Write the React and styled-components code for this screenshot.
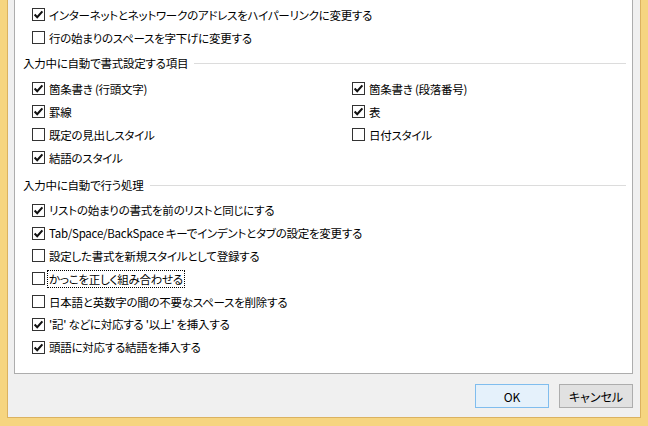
import React from 'react';
import styled, { createGlobalStyle } from 'styled-components';

const GlobalStyle = createGlobalStyle`
    html, body {
        margin: 0;
        padding: 0;
        background: #f5d47f;
    }
    * { box-sizing: border-box; }
`;

const Frame = styled.div`
    width: 648px;
    height: 426px;
    background: #f6d580;
    padding: 0 7px 8px 7px;
    display: flex;
    flex-direction: column;
    font-family: "Noto Sans CJK JP", "Noto Sans", sans-serif;
    font-feature-settings: "palt" 1;
    font-size: 11.5px;
    letter-spacing: -0.25px;
    color: #000;
    overflow: hidden;
`;

const Dialog = styled.div`
    flex: 1;
    background: #f0f0f0;
    border: 1px solid #dbb260;
    border-top: none;
    padding: 0 7px 0 6px;
    display: flex;
    flex-direction: column;
`;

const Panel = styled.div`
    height: 374px;
    background: #fff;
    border: 1px solid #adadad;
    border-top: none;
    padding: 3px 6px 0 8px;
`;

const Header = styled.div`
    height: ${p => p.$h || 28}px;
    display: flex;
    align-items: center;
    gap: 6px;
    padding-top: ${p => p.$pt || 0}px;
    &::after {
        content: '';
        flex: 1;
        height: 1px;
        background: #dcdcdc;
    }
`;

const Group = styled.div`
    padding-left: 9px;
    display: grid;
    grid-template-columns: ${p => (p.$cols ? '320px 1fr' : '1fr')};
    grid-auto-rows: ${p => p.$pitch || 23}px;
`;

const Row = styled.div`
    display: flex;
    align-items: center;
    gap: 2px;
    white-space: nowrap;
`;

const Box = styled.span`
    width: 13px;
    height: 13px;
    flex: none;
    border: 1px solid #333;
    background: #fff;
    display: flex;
    align-items: center;
    justify-content: center;
`;

const Label = styled.span`
    line-height: 16px;
    padding: 0 1px;
    border: 1px dotted ${p => (p.$focus ? '#000' : 'transparent')};
`;

const ButtonBar = styled.div`
    flex: 1;
    display: flex;
    justify-content: flex-end;
    align-items: flex-start;
    padding-top: 10px;
    gap: 10px;
`;

const Button = styled.button`
    width: 74px;
    height: 24px;
    font: inherit;
    font-size: 12px;
    color: #000;
    background: ${p => (p.$primary ? '#e5f1fb' : '#e1e1e1')};
    border: 1px solid ${p => (p.$primary ? '#80bdee' : '#adadad')};
    padding: 0;
`;

const Check = ({ on }) => (
    <Box>
        {on && (
            <svg width="11" height="11" viewBox="0 0 11 11">
                <path d="M1.6 5.6 L4.2 8.2 L9.4 2.4" fill="none" stroke="#111" strokeWidth="2.1" />
            </svg>
        )}
    </Box>
);

const Item = ({ on, text, focus }) => (
    <Row>
        <Check on={on} />
        <Label $focus={focus}>{text}</Label>
    </Row>
);

const App = () => {
    return (
        <>
            <GlobalStyle />
            <Frame>
                <Dialog>
                    <Panel>
                        <Group>
                            <Item on text="インターネットとネットワークのアドレスをハイパーリンクに変更する" />
                            <Item text="行の始まりのスペースを字下げに変更する" />
                        </Group>
                        <Header>入力中に自動で書式設定する項目</Header>
                        <Group $cols>
                            <Item on text="箇条書き (行頭文字)" />
                            <Item on text="箇条書き (段落番号)" />
                            <Item on text="罫線" />
                            <Item on text="表" />
                            <Item text="既定の見出しスタイル" />
                            <Item text="日付スタイル" />
                            <Item on text="結語のスタイル" />
                        </Group>
                        <Header $h={30} $pt={2}>入力中に自動で行う処理</Header>
                        <Group $pitch={22.8}>
                            <Item on text="リストの始まりの書式を前のリストと同じにする" />
                            <Item on text="Tab/Space/BackSpace キーでインデントとタブの設定を変更する" />
                            <Item text="設定した書式を新規スタイルとして登録する" />
                            <Item text="かっこを正しく組み合わせる" focus />
                            <Item text="日本語と英数字の間の不要なスペースを削除する" />
                            <Item on text="'記' などに対応する '以上' を挿入する" />
                            <Item on text="頭語に対応する結語を挿入する" />
                        </Group>
                    </Panel>
                    <ButtonBar>
                        <Button $primary>OK</Button>
                        <Button>キャンセル</Button>
                    </ButtonBar>
                </Dialog>
            </Frame>
        </>
    );
};

export default App;
